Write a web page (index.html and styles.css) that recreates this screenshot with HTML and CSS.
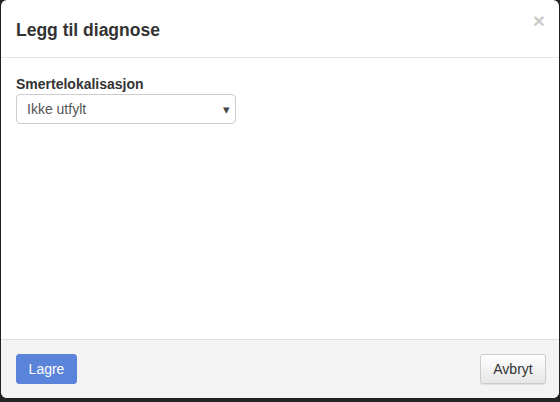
FILE: index.html
```html
<!DOCTYPE html>
<html lang="no">
<head>
<meta charset="utf-8">
<title>Legg til diagnose</title>
<link rel="stylesheet" href="styles.css">
</head>
<body>
<div class="backdrop">
  <div class="modal">
    <div class="modal-header">
      <h4 class="modal-title">Legg til diagnose</h4>
      <span class="close">&times;</span>
    </div>
    <div class="modal-body">
      <label class="field-label">Smertelokalisasjon</label>
      <div class="select">
        <span class="select-text">Ikke utfylt</span>
        <span class="caret">&#9662;</span>
      </div>
    </div>
    <div class="modal-footer">
      <button class="btn btn-primary">Lagre</button>
      <button class="btn btn-default">Avbryt</button>
    </div>
  </div>
</div>
</body>
</html>
```
FILE: styles.css
```css
html, body {
  margin: 0;
  padding: 0;
  width: 560px;
  height: 402px;
  overflow: hidden;
}
body {
  font-family: "Liberation Sans", Arial, sans-serif;
  font-size: 14px;
  color: #333;
  background: #222;
}
.backdrop {
  height: 402px;
  padding: 0 1px 4px 1px;
  box-sizing: border-box;
  display: flex;
}
.modal {
  flex: 1;
  display: flex;
  flex-direction: column;
  background: #fff;
  border-radius: 6px;
  overflow: hidden;
}
.modal-header {
  height: 58px;
  box-sizing: border-box;
  padding: 0 14px 0 15px;
  border-bottom: 1px solid #e5e5e5;
  display: flex;
  align-items: center;
  justify-content: space-between;
}
.modal-title {
  margin: 0;
  font-size: 17.5px;
  font-weight: bold;
  color: #333;
  line-height: 26px;
  position: relative;
  top: 1px;
}
.close {
  font-size: 21px;
  font-weight: bold;
  color: #000;
  opacity: 0.2;
  line-height: 1;
  margin-top: -16px;
}
.modal-body {
  flex: 1;
  padding: 15px 15px;
  display: flex;
  flex-direction: column;
  align-items: flex-start;
}
.field-label {
  font-weight: bold;
  font-size: 14px;
  line-height: 20px;
  margin-top: 1px;
  margin-bottom: 0;
}
.select {
  width: 220px;
  height: 30px;
  box-sizing: border-box;
  border: 1px solid #ccc;
  border-radius: 4px;
  display: flex;
  align-items: center;
  justify-content: space-between;
  padding: 0 5px 0 10px;
  color: #555;
}
.select-text {
  font-size: 14px;
}
.caret {
  font-size: 13px;
  color: #444;
}
.modal-footer {
  height: 59px;
  box-sizing: border-box;
  border-top: 1px solid #e0e0e0;
  background: #f3f3f3;
  padding: 0 13px 0 15px;
  display: flex;
  align-items: center;
  justify-content: space-between;
}
.btn {
  font-family: "Liberation Sans", Arial, sans-serif;
  font-size: 14px;
  height: 30px;
  border-radius: 3px;
  padding: 0 10px;
}
.btn-primary {
  width: 61px;
  background: #5a83da;
  border: 1px solid #5a83da;
  color: #fff;
}
.btn-default {
  width: 66px;
  color: #333;
  border: 1px solid #ccc;
  background: linear-gradient(#fff, #e6e6e6);
  box-shadow: 0 1px 1px rgba(0,0,0,0.08);
}
```
